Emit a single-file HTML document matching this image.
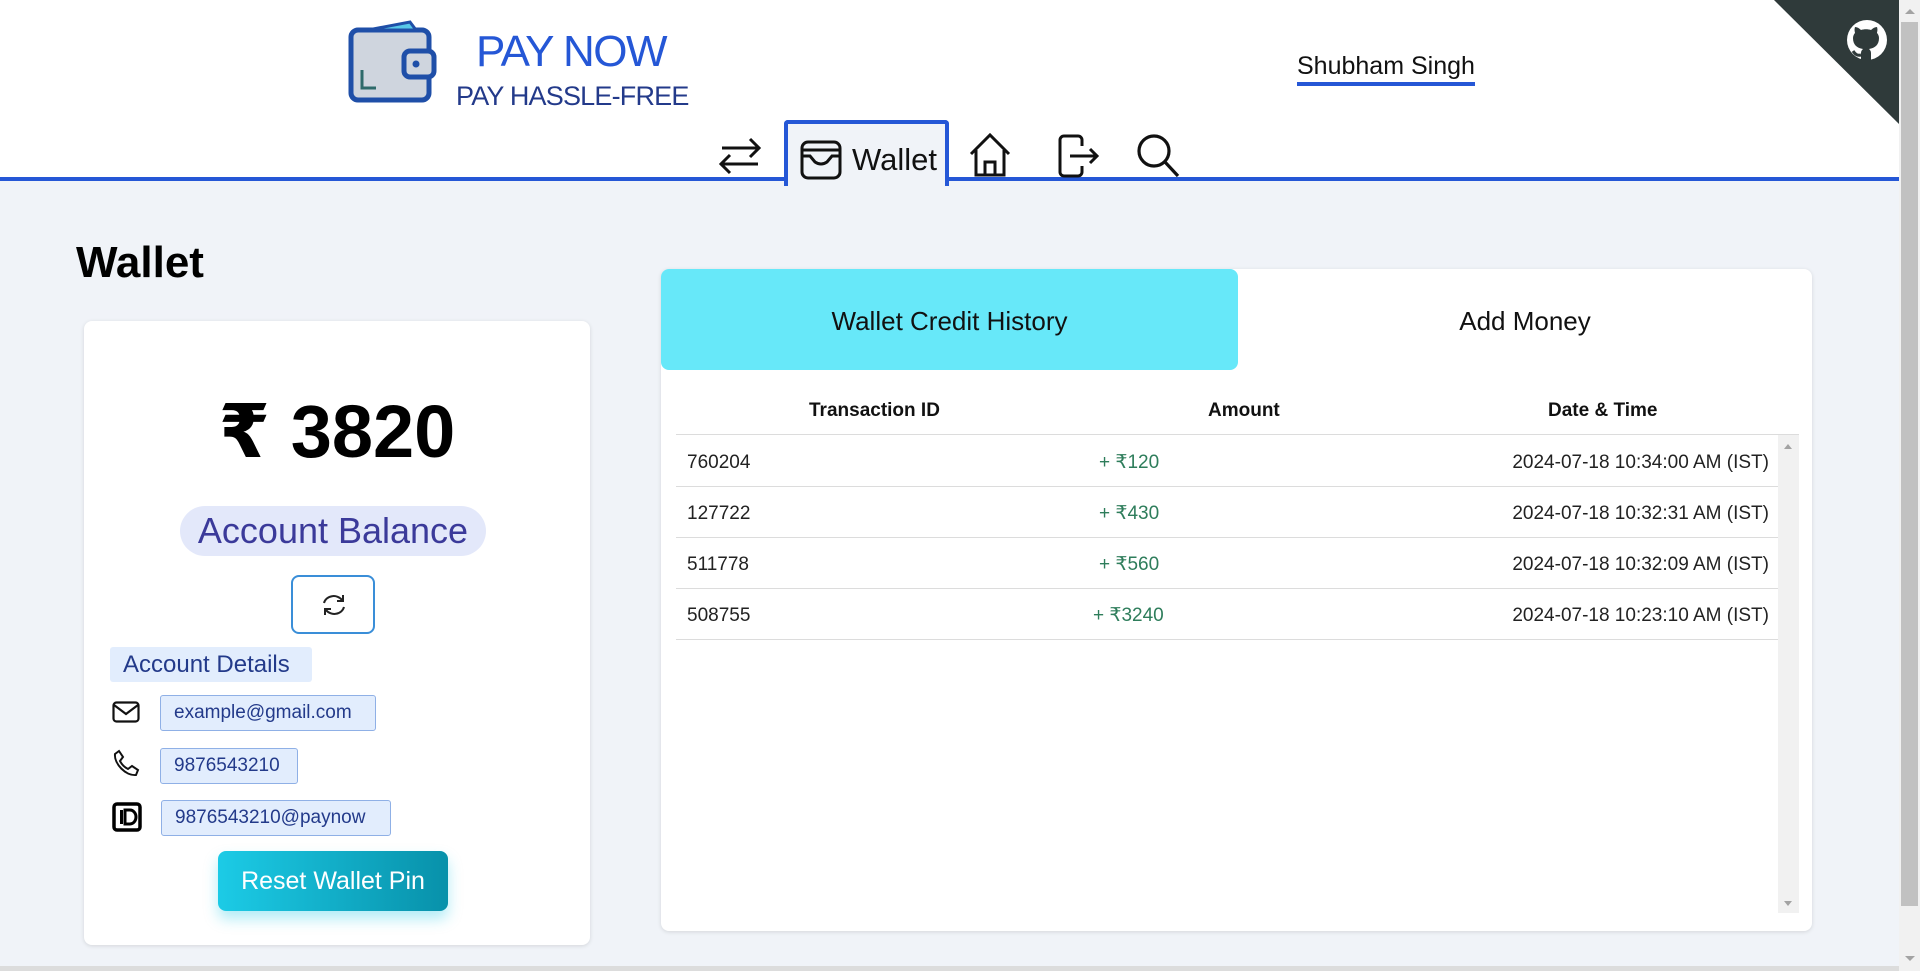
<!DOCTYPE html>
<html><head><meta charset="utf-8"><style>
*{box-sizing:border-box;margin:0;padding:0}
body{width:1920px;height:971px;overflow:hidden;background:#f0f3f8;font-family:"Liberation Sans","DejaVu Sans",sans-serif;position:relative}
.abs{position:absolute}
header{position:absolute;left:0;top:0;width:1899px;height:181px;background:#fff;border-bottom:4px solid #2557d6}
.tab{position:absolute;left:784px;top:120px;width:165px;height:66px;background:#f0f3f8;border:4px solid #2557d6;border-bottom:none;border-radius:4px 4px 0 0}
.chip{position:absolute;left:76px;height:36px;background:#e2edfd;border:1px solid #8fb0e6;border-radius:3px;color:#233a8a;font-size:19px;line-height:34px;padding:0 13px}
.row{position:absolute;left:676px;width:1102px;height:51px;border-bottom:1px solid #dcdcdc;font-size:19px;color:#222;line-height:50px}
.row span{position:absolute}
</style></head><body>
<header>
<svg class="abs" style="left:348px;top:18px" width="96" height="86" viewBox="0 0 96 86">
<rect x="3" y="12" width="78" height="70" rx="7" fill="#cfd5de" stroke="#1f4fa8" stroke-width="5"/>
<polygon points="20,12 62,4 68,12" fill="#58c9e8" stroke="#1f4fa8" stroke-width="3"/>
<rect x="56" y="33" width="30" height="26" rx="6" fill="#cfd5de" stroke="#1f4fa8" stroke-width="5"/>
<circle cx="68" cy="46" r="3.5" fill="#1f4fa8"/>
<path d="M14 52 V70 H28" stroke="#2e6a6a" stroke-width="3" fill="none"/>
</svg>
<div class="abs" style="left:476px;top:27px;font-size:44px;color:#2557d6;letter-spacing:-1.5px">PAY NOW</div>
<div class="abs" style="left:456px;top:81px;font-size:27px;color:#233a8a;letter-spacing:-0.8px">PAY HASSLE-FREE</div>
<div class="abs" style="left:1297px;top:52px;font-size:25px;color:#111">Shubham Singh</div>
<div class="abs" style="left:1297px;top:82px;width:178px;height:4px;background:#2557d6"></div>
<svg class="abs" style="left:1774px;top:0" width="125" height="124"><polygon points="0,0 125,0 125,124" fill="#2f3a3a"/>
<circle cx="93" cy="40" r="20" fill="#fff"/>
<path d="M87 60v-7c0-2 1-3 2-4-6-1-10-4-10-11 0-2 1-4 2-5 0-1-1-3 0-6 2 0 4 1 6 3 3-1 7-1 10 0 2-2 4-3 6-3 1 3 0 5 0 6 1 1 2 3 2 5 0 7-4 10-10 11 1 1 2 2 2 4v7z" fill="#2f3a3a"/>
<path d="M87 55c-4 1-6-1-8-4" stroke="#2f3a3a" stroke-width="3" fill="none"/></svg>
</header>
<div class="tab"></div>
<svg class="abs" style="left:718px;top:134px" width="44" height="44" viewBox="0 0 44 44" fill="none" stroke="#111" stroke-width="3"><path d="M4 14h36M32 5l9 9-9 9M40 30H4M12 21l-9 9 9 9"/></svg>
<svg class="abs" style="left:800px;top:140px" width="42" height="40" viewBox="0 0 42 40" fill="none" stroke="#111" stroke-width="3"><rect x="2" y="2" width="38" height="36" rx="6"/><path d="M2 10h38M2 16h8l5 6q6 4 12 0l5-6h8"/></svg>
<div class="abs" style="left:852px;top:142px;font-size:31px;color:#111">Wallet</div>
<svg class="abs" style="left:968px;top:132px" width="44" height="46" viewBox="0 0 44 46" fill="none" stroke="#111" stroke-width="3"><path d="M3 22L22 3l19 19M8 18v25h28V18M17 43V30h10v13"/></svg>
<svg class="abs" style="left:1056px;top:134px" width="44" height="44" viewBox="0 0 44 44" fill="none" stroke="#111" stroke-width="3"><path d="M26 12V6a4 4 0 0 0-4-4H8a4 4 0 0 0-4 4v32a4 4 0 0 0 4 4h14a4 4 0 0 0 4-4v-6M14 22h26M34 15l7 7-7 7"/></svg>
<svg class="abs" style="left:1136px;top:133px" width="44" height="46" viewBox="0 0 44 46" fill="none" stroke="#111" stroke-width="3.2"><circle cx="18" cy="18" r="15"/><path d="M29 29l13 14"/></svg>

<div class="abs" style="left:76px;top:238px;font-size:44px;font-weight:bold;color:#000">Wallet</div>
<div class="abs" style="left:84px;top:321px;width:506px;height:624px;background:#fff;border-radius:8px;box-shadow:0 1px 4px rgba(0,0,0,.12)">
<div class="abs" style="left:0;width:506px;top:68px;text-align:center;font-size:74px;font-weight:bold;color:#000">₹ 3820</div>
<div class="abs" style="left:96px;top:185px;width:306px;height:50px;border-radius:25px;background:#e3e8fa;color:#3b3a9a;font-size:36px;text-align:center;line-height:50px">Account Balance</div>
<div class="abs" style="left:207px;top:254px;width:84px;height:59px;border:2px solid #3a8ed8;border-radius:8px"></div>
<svg class="abs" style="left:237px;top:272px" width="26" height="24" viewBox="0 0 26 24" fill="none" stroke="#222" stroke-width="2"><path d="M3 10A10 9 0 0 1 21 7M22 2v6h-6M23 14A10 9 0 0 1 5 17M4 22v-6h6"/></svg>
<div class="abs" style="left:26px;top:326px;width:202px;height:35px;background:#e2edfd;border-radius:3px;color:#233a8a;font-size:24px;line-height:35px;padding-left:13px">Account Details</div>
<svg class="abs" style="left:28px;top:380px" width="28" height="22" viewBox="0 0 28 22" fill="none" stroke="#111" stroke-width="2.2"><rect x="1.5" y="1.5" width="25" height="19" rx="3"/><path d="M2 4l12 9 12-9"/></svg>
<svg class="abs" style="left:28px;top:428px" width="28" height="28" viewBox="0 0 28 28" fill="none" stroke="#111" stroke-width="2"><path d="M7 2l4 6-3 4c2 4 4 6 8 8l4-3 6 4-2 5c-10 1-22-11-21-21z"/></svg>
<svg class="abs" style="left:28px;top:481px" width="30" height="30" viewBox="0 0 30 30"><rect x="2" y="2" width="26" height="26" rx="3" fill="none" stroke="#000" stroke-width="3.5"/><rect x="8" y="8" width="3" height="14"/><path d="M13 8h5a6 7 0 0 1 0 14h-5z" fill="none" stroke="#000" stroke-width="3"/></svg>
<div class="chip" style="top:374px;width:216px">example@gmail.com</div>
<div class="chip" style="top:427px;width:138px">9876543210</div>
<div class="chip" style="top:479px;left:77px;width:230px">9876543210@paynow</div>
<div class="abs" style="left:134px;top:530px;width:230px;height:60px;border-radius:8px;background:linear-gradient(90deg,#1ccbe6,#0891aa);color:#fff;font-size:25px;text-align:center;line-height:60px;box-shadow:0 8px 14px rgba(34,200,230,.35)">Reset Wallet Pin</div>
</div>

<div class="abs" style="left:661px;top:269px;width:1151px;height:662px;background:#fff;border-radius:8px;box-shadow:0 1px 4px rgba(0,0,0,.12)"></div>
<div class="abs" style="left:661px;top:269px;width:577px;height:101px;background:#67e8f9;border-radius:8px;text-align:center;line-height:104px;font-size:26px;color:#111">Wallet Credit History</div>
<div class="abs" style="left:1238px;top:269px;width:574px;height:101px;text-align:center;line-height:104px;font-size:26px;color:#111">Add Money</div>
<div class="abs" style="left:676px;top:400px;width:1123px;height:35px;border-bottom:1px solid #dcdcdc;font-size:19px;font-weight:bold;color:#111">
<span class="abs" style="left:133px">Transaction ID</span><span class="abs" style="left:532px">Amount</span><span class="abs" style="left:872px">Date &amp; Time</span></div>
<div class="abs" style="left:1778px;top:435px;width:21px;height:478px;background:#f1f1f1"></div>
<div class="abs" style="left:1784px;top:444px;border:4px solid transparent;border-bottom:5px solid #a3a3a3;border-top:none"></div>
<div class="abs" style="left:1784px;top:901px;border:4px solid transparent;border-top:5px solid #a3a3a3;border-bottom:none"></div>
<div class="row" style="top:436px;line-height:53px"><span style="left:11px">760204</span><span style="left:423px;color:#2e7d5b">+ ₹120</span><span style="right:9px">2024-07-18 10:34:00 AM (IST)</span></div>
<div class="row" style="top:487px;line-height:53px"><span style="left:11px">127722</span><span style="left:423px;color:#2e7d5b">+ ₹430</span><span style="right:9px">2024-07-18 10:32:31 AM (IST)</span></div>
<div class="row" style="top:538px;line-height:53px"><span style="left:11px">511778</span><span style="left:423px;color:#2e7d5b">+ ₹560</span><span style="right:9px">2024-07-18 10:32:09 AM (IST)</span></div>
<div class="row" style="top:589px;line-height:53px"><span style="left:11px">508755</span><span style="left:417px;color:#2e7d5b">+ ₹3240</span><span style="right:9px">2024-07-18 10:23:10 AM (IST)</span></div>

<div class="abs" style="left:1899px;top:0;width:21px;height:971px;background:#f1f1f1"></div>
<div class="abs" style="left:1901px;top:22px;width:17px;height:884px;background:#c1c1c1"></div>
<div class="abs" style="left:1905px;top:9px;border:5px solid transparent;border-bottom:5px solid #a3a3a3;border-top:none"></div>
<div class="abs" style="left:1905px;top:956px;border:5px solid transparent;border-top:5px solid #a3a3a3;border-bottom:none"></div>
<div class="abs" style="left:0;top:966px;width:1899px;height:5px;background:#dcdcdc"></div>
</body></html>
